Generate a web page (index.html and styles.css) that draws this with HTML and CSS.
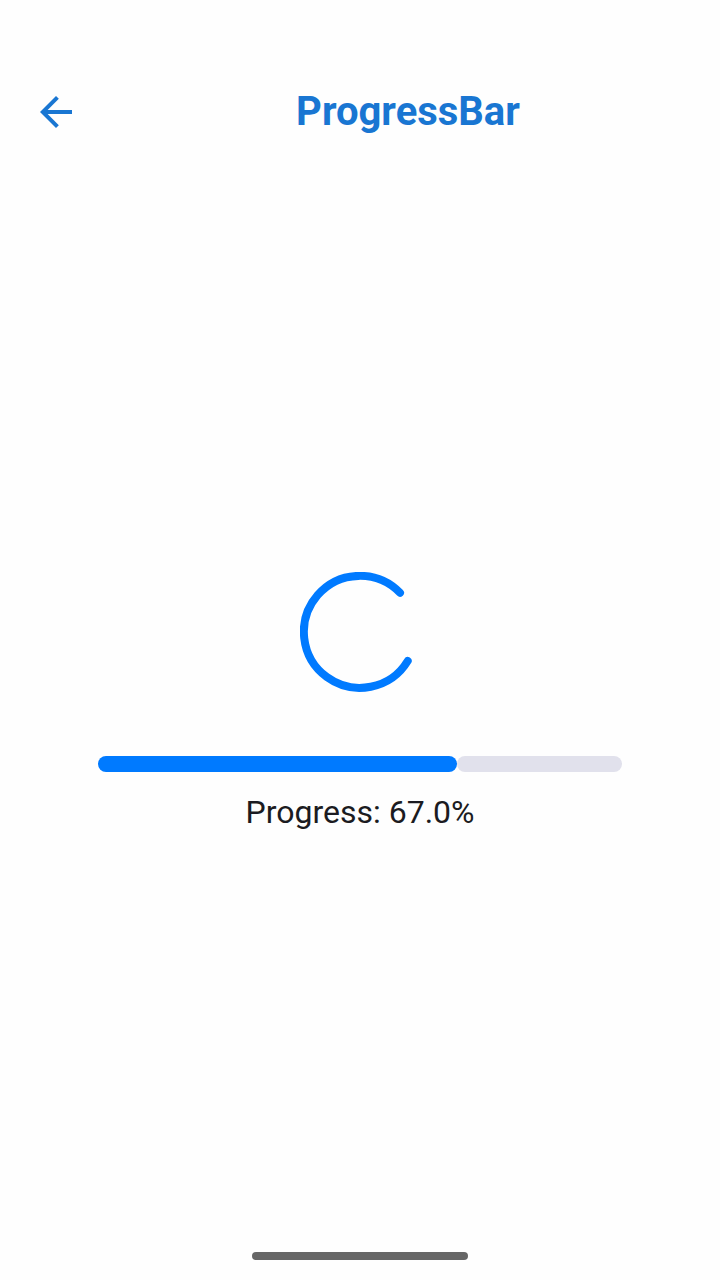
FILE: index.html
```html
<!DOCTYPE html>
<html lang="en">
<head>
  <meta charset="utf-8">
  <meta name="viewport" content="width=device-width, initial-scale=1">
  <title>ProgressBar</title>
  <link rel="stylesheet" href="styles.css">
</head>
<body class="screen">
  <header class="app-bar">
    <button class="back-button" type="button" aria-label="Back">
      <svg class="back-icon" viewBox="0 0 24 24" aria-hidden="true">
        <path d="M20 11H7.83l5.59-5.59L12 4l-8 8 8 8 1.41-1.41L7.83 13H20v-2z"/>
      </svg>
    </button>
    <h1 class="app-title">ProgressBar</h1>
  </header>

  <main class="content">
    <svg class="spinner" viewBox="0 0 120 120" role="img" aria-label="Loading">
      <path class="spinner-arc" d="M100 20.8A56 56 0 1 0 107.7 89"/>
    </svg>
    <div class="progress-group">
      <div class="track" role="progressbar" aria-labelledby="progress-label" aria-valuemin="0" aria-valuemax="100" aria-valuenow="67">
        <div class="track-fill" style="--value: 67%"></div>
        <div class="track-rest"></div>
      </div>
      <p class="progress-label" id="progress-label">Progress: 67.0%</p>
    </div>
  </main>

  <footer class="nav-area">
    <div class="home-handle"></div>
  </footer>
</body>
</html>
```
FILE: styles.css
```css
* {
  box-sizing: border-box;
}

.screen {
  display: flex;
  flex-direction: column;
  min-height: 100vh;
  margin: 0;
  padding-top: 48px;
  background: #fefefe;
  color: #1b1b21;
  font-family: Roboto, "Liberation Sans", sans-serif;
}

.app-bar {
  display: flex;
  align-items: center;
  min-height: 128px;
  padding: 0 8px;
  color: #1976d2;
}

.back-button {
  display: flex;
  align-items: center;
  justify-content: center;
  width: 96px;
  height: 96px;
  padding: 0;
  border: 0;
  border-radius: 50%;
  background: transparent;
  color: inherit;
}

.back-icon {
  width: 48px;
  height: 48px;
  fill: currentColor;
}

.app-title {
  flex: 1;
  margin: 0;
  font-size: 40px;
  font-weight: 700;
  line-height: 56px;
  text-align: center;
}

.content {
  display: flex;
  flex: 1;
  flex-direction: column;
  align-items: center;
  justify-content: center;
  gap: 64px;
  padding: 0 32px;
}

.spinner {
  width: 120px;
  height: 120px;
}

.spinner-arc {
  fill: none;
  stroke: #007aff;
  stroke-width: 8;
  stroke-linecap: round;
}

.progress-group {
  display: flex;
  flex-direction: column;
  align-items: center;
  gap: 16px;
  width: 100%;
}

.track {
  display: flex;
  width: 80%;
  height: 16px;
}

.track-fill {
  width: calc(var(--value) + 8px);
  border-radius: 8px;
  background: #007aff;
}

.track-rest {
  flex: 1;
  border-radius: 8px;
  background: #e1e1ec;
}

.progress-label {
  margin: 0;
  font-size: 32px;
  line-height: 48px;
}

.nav-area {
  display: flex;
  align-items: center;
  justify-content: center;
  height: 48px;
}

.home-handle {
  width: 30%;
  height: 8px;
  border-radius: 4px;
  background: #666666;
}
```
